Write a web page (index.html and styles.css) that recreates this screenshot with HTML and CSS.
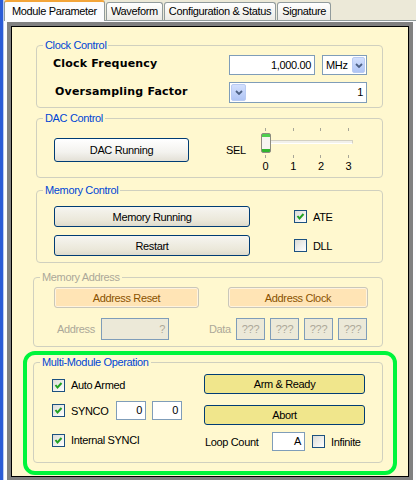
FILE: index.html
```html
<!DOCTYPE html>
<html lang="en">
<head>
  <meta charset="UTF-8" />
  <title>Module Parameter</title>
  <link rel="stylesheet" href="styles.css">
</head>
<body>
<div class="screen">
  <div class="edge"></div>
  <div class="tabctl">
    <div class="tabs">
      <div class="tab active">Module Parameter</div>
      <div class="tab">Waveform</div>
      <div class="tab">Configuration &amp; Status</div>
      <div class="tab">Signature</div>
    </div>

    <div class="page">
      <div class="frame">

        <fieldset class="group clock">
          <legend>Clock Control</legend>
          <div class="clock-body">
            <span class="big">Clock Frequency</span>
            <div class="field freq">1,000.00</div>
            <div class="combo unit">
              <span class="val">MHz</span>
              <span class="drop"><svg width="8" height="5" viewBox="0 0 8 5"><polyline points="1,1 4,4 7,1" fill="none" stroke="#4d6185" stroke-width="1.8"/></svg></span>
            </div>
            <span class="big shift">Oversampling Factor</span>
            <div class="combo wide rtl">
              <span class="drop"><svg width="8" height="5" viewBox="0 0 8 5"><polyline points="1,1 4,4 7,1" fill="none" stroke="#4d6185" stroke-width="1.8"/></svg></span>
              <span class="val">1</span>
            </div>
          </div>
        </fieldset>

        <fieldset class="group dac">
          <legend>DAC Control</legend>
          <div class="dac-body">
            <button class="btn white dac-btn">DAC Running</button>
            <span class="sel">SEL</span>
            <div class="slider">
              <div class="ticks"><i></i><i></i><i></i><i></i></div>
              <div class="rail"><span class="track"></span><span class="thumb"></span></div>
              <div class="ticks"><i></i><i></i><i></i><i></i></div>
              <div class="ticks scale"><span>0</span><span>1</span><span>2</span><span>3</span></div>
            </div>
          </div>
        </fieldset>

        <fieldset class="group memory">
          <legend>Memory Control</legend>
          <div class="memory-body">
            <button class="btn beige">Memory Running</button>
            <label class="check"><span class="box"><svg width="11" height="11" viewBox="0 0 11 11"><polyline points="2.5,5 4.5,7.5 8.5,3" fill="none" stroke="#21a121" stroke-width="2"/></svg></span>ATE</label>
            <button class="btn beige">Restart</button>
            <label class="check"><span class="box"></span>DLL</label>
          </div>
        </fieldset>

        <fieldset class="group address off">
          <legend>Memory Address</legend>
          <div class="address-body">
            <div class="addr-row">
              <button class="btn peach reset">Address Reset</button>
              <button class="btn peach clk">Address Clock</button>
            </div>
            <div class="addr-row second">
              <span class="dim addr-label">Address</span>
              <div class="field dead addr">?</div>
              <span class="dim data-label">Data</span>
              <div class="data-boxes">
                <div class="field dead cell">???</div>
                <div class="field dead cell">???</div>
                <div class="field dead cell">???</div>
                <div class="field dead cell">???</div>
              </div>
            </div>
          </div>
        </fieldset>

        <div class="multi">
          <fieldset class="group inner">
            <legend>Multi-Module Operation</legend>
            <div class="multi-body">
              <div class="col left">
                <label class="check r1"><span class="box"><svg width="11" height="11" viewBox="0 0 11 11"><polyline points="2.5,5 4.5,7.5 8.5,3" fill="none" stroke="#21a121" stroke-width="2"/></svg></span>Auto Armed</label>
                <div class="check r2">
                  <span class="box"><svg width="11" height="11" viewBox="0 0 11 11"><polyline points="2.5,5 4.5,7.5 8.5,3" fill="none" stroke="#21a121" stroke-width="2"/></svg></span>
                  <span class="synco">SYNCO</span>
                  <div class="field num">0</div>
                  <div class="field num">0</div>
                </div>
                <label class="check r3"><span class="box"><svg width="11" height="11" viewBox="0 0 11 11"><polyline points="2.5,5 4.5,7.5 8.5,3" fill="none" stroke="#21a121" stroke-width="2"/></svg></span>Internal SYNCI</label>
              </div>
              <div class="col right">
                <button class="btn khaki">Arm &amp; Ready</button>
                <button class="btn khaki abort">Abort</button>
                <div class="loop">
                  <span class="loop-label">Loop Count</span>
                  <div class="field loop-box">A</div>
                  <label class="check"><span class="box"></span>Infinite</label>
                </div>
              </div>
            </div>
          </fieldset>
        </div>

      </div>
    </div>
  </div>
</div>
</body>
</html>
```

FILE: styles.css
```css
body { margin: 0; background: #ece9d8; color: #000;
       font: 11px "Liberation Sans", Arial, sans-serif; letter-spacing: -0.35px; }
button { font: inherit; letter-spacing: inherit; color: inherit; margin: 0; padding: 0; cursor: pointer; }

.screen { display: flex; width: 416px; height: 480px; overflow: hidden; }
.edge { width: 3px; background: #2a5bd7; border-right: 1px solid #b8c9ee; }
.tabctl { flex: 1; display: flex; flex-direction: column; }

/* tab strip */
.tabs { display: flex; align-items: flex-end; height: 20px; gap: 1px; }
.tab { height: 17px; line-height: 17px; padding: 0 4px; border: 1px solid #919b9c; border-bottom: 0;
       border-radius: 3px 3px 0 0; background: linear-gradient(#fff, #ecebe6); white-space: nowrap; }
.tab.active { height: 19px; line-height: 19px; padding: 0 7px; margin-bottom: -1px; position: relative; z-index: 1;
              border-top: 2px solid #f3a53a; background: #fcfcfe; }

.page { flex: 1; border-top: 1px solid #919b9c; background: #fcfcfe; padding: 1px 0 0 3px; }

.frame { width: 406px; height: 459px; box-sizing: border-box; border: 4px solid #808080;
         box-shadow: inset 1px 1px #000, inset -1px -1px #000; background: #fff8cf;
         padding-top: 13px; display: flex; flex-direction: column; }

/* group boxes */
.group { margin: 0 0 0 25px; width: 347px; box-sizing: border-box; padding: 0; min-width: 0;
         border: 1px solid #d0d0bf; border-radius: 4px; }
.group legend { margin-left: 6px; padding: 0 2px; line-height: 13px; color: #0046d5; }
.group.off legend { color: #aca899; }
.dac { margin-top: 4px; }
.memory { margin-top: 6px; }
.address { margin: 8px 0 0 22px; width: 350px; }

/* shared controls */
.btn { box-sizing: border-box; border: 1px solid #003c74; border-radius: 3px; text-align: center; }
.btn.white { background: linear-gradient(#fff, #f3f2ee 60%, #e3e0d6); }
.btn.beige { background: linear-gradient(#f6f5f0, #ebe8da 70%, #dedbcc); height: 21px; width: 196px; }
.btn.khaki { background: #f0e68c; height: 20px; width: 161px; }
.btn.peach { background: #ffe4b5; border-color: #c9c7ba; box-shadow: inset 0 0 0 1px #fff3de;
             color: #8a5200; height: 21px; cursor: default; }

.field { box-sizing: border-box; border: 1px solid #7f9db9; background: #fff; height: 20px;
         line-height: 18px; padding: 0 3px; text-align: right; }
.field.dead { background: #ece9d8; color: #aca899; height: 22px; line-height: 20px; }
.dim { color: #aca899; }

.check { display: flex; align-items: center; gap: 6px; }
.box { width: 13px; height: 13px; box-sizing: border-box; border: 1px solid #1c5180; flex: none;
       background: linear-gradient(135deg, #dcdcd7, #fff); display: flex; }

.combo { display: flex; box-sizing: border-box; height: 20px; padding: 1px; border: 1px solid #7f9db9; background: #fff; }
.combo .val { flex: 1; line-height: 16px; padding: 0 2px; }
.combo .drop { width: 13px; box-sizing: border-box; border: 1px solid #b9cbf3; border-radius: 2px;
               background: linear-gradient(#d3e0fd, #b0c5f5); display: flex; align-items: center; justify-content: center; }
.combo.rtl .val { text-align: right; }
.combo.rtl .drop { width: 15px; }

/* clock control */
.clock-body { display: grid; grid-template-columns: 169px 86px 45px; column-gap: 7px; row-gap: 7px;
              align-items: center; padding: 3px 0 4px 16px; }
.big { font: bold 11px "DejaVu Sans", Verdana, sans-serif; letter-spacing: 0.2px; margin-top: -3px; }
.big.shift { padding-left: 2px; }
.freq { height: 20px; }
.combo.wide { grid-column: 2 / 4; height: 21px; }

/* dac control */
.dac-body { display: flex; align-items: center; height: 44px; padding: 3px 0 5px 17px; }
.dac-btn { width: 135px; height: 24px; }
.sel { width: 35px; margin-left: 37px; }
.slider { width: 92px; display: flex; flex-direction: column; }
.ticks { display: flex; justify-content: space-between; margin: 0 4px; height: 3px; }
.ticks i { width: 1px; background: #a7a697; }
.rail { position: relative; height: 20px; margin: 2px 0; }
.track { position: absolute; left: 5px; right: 0; top: 7px; height: 4px; box-sizing: border-box;
         border: 1px solid #d3d0c2; border-bottom-color: #fff; background: #f2f1ea; }
.thumb { position: absolute; left: 0; top: 0; width: 10px; height: 20px; box-sizing: border-box;
         border: 1px solid #8c8b80; border-radius: 2px;
         background: linear-gradient(#4fcf4f 0 3px, #f6f5f1 3px calc(100% - 3px), #2fb52f calc(100% - 3px)); }
.scale { height: 11px; margin-top: 3px; line-height: 11px; }
.scale span { width: 1px; display: flex; justify-content: center; }

/* memory control */
.memory-body { display: grid; grid-template-columns: 196px auto; column-gap: 44px; row-gap: 8px;
               align-items: center; padding: 9px 0 6px 17px; }

/* memory address */
.address-body { padding: 3px 0 6px 20px; }
.addr-row { display: flex; align-items: center; }
.reset { width: 145px; }
.clk { width: 140px; margin-left: 29px; }
.addr-row.second { margin-top: 10px; }
.addr-label { width: 44px; margin-left: 3px; }
.addr { width: 68px; }
.data-label { width: 27px; margin-left: 40px; }
.data-boxes { display: flex; gap: 5px; }
.cell { width: 29px; text-align: center; padding: 0; }

/* multi-module */
.multi { margin: 4px 0 0 12px; width: 374px; height: 124px; box-sizing: border-box;
         border: 4px solid #00f53c; border-radius: 12px; padding: 1px 0 0 6px; }
.group.inner { margin: 0; width: 350px; }
.multi-body { display: flex; padding: 5px 0 11px 18px; }
.col { display: flex; flex-direction: column; }
.col.left { width: 152px; padding-top: 1px; }
.r1 { height: 20px; }
.r2 { height: 19px; margin-top: 6px; }
.r3 { height: 20px; margin-top: 10px; }
.synco { width: 39px; }
.num { width: 30px; height: 19px; line-height: 17px; }
.col.right { width: 161px; }
.abort { margin-top: 11px; }
.loop { display: flex; align-items: center; margin-top: 7px; height: 19px; }
.loop-label { width: 67px; margin-left: 1px; }
.loop-box { width: 33px; height: 19px; line-height: 17px; margin-right: 7px; }
```
